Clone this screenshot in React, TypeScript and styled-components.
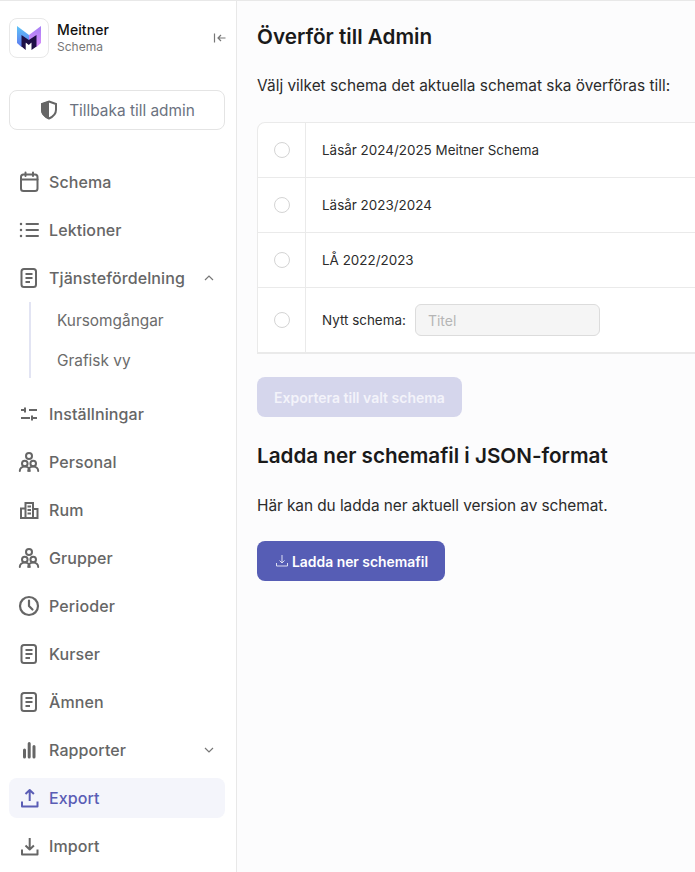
import React from 'react';
import styled, { createGlobalStyle } from 'styled-components';

const GlobalStyle = createGlobalStyle`
  html, body {
    margin: 0;
    padding: 0;
    height: 100%;
    overflow: hidden;
    background: #fcfcfd;
  }
  * { box-sizing: border-box; }
`;

const Page = styled.div`
  display: flex;
  width: 100%;
  height: 872px;
  overflow: hidden;
  border-top: 1px solid #e8e8e8;
  font-family: Inter, "Liberation Sans", sans-serif;
`;

const Sidebar = styled.aside`
  flex: 0 0 237px;
  height: 100%;
  padding: 17px 11px 0 9px;
  background: #ffffff;
  border-right: 1px solid #e8e8e8;
`;

const Brand = styled.div`
  display: flex;
  align-items: center;
  gap: 8px;
`;

const LogoBox = styled.div`
  display: flex;
  align-items: center;
  justify-content: center;
  width: 40px;
  height: 40px;
  border: 1px solid #e8e8e8;
  border-radius: 8px;
`;

const BrandText = styled.div`
  flex: 1;
  display: flex;
  flex-direction: column;
  gap: 1px;
  padding-bottom: 2px;
`;

const BrandName = styled.div`
  font-size: 14px;
  line-height: 17px;
  font-weight: 500;
  letter-spacing: 0.1px;
  color: #111;
`;

const BrandSub = styled.div`
  font-size: 12px;
  line-height: 15px;
  color: #777;
`;

const CollapseIcon = styled.svg`
  width: 14px;
  height: 14px;
  margin-right: -2px;
  color: #777;
`;

const BackButton = styled.button`
  display: flex;
  align-items: center;
  justify-content: center;
  gap: 10px;
  width: 216px;
  height: 40px;
  margin-top: 32px;
  background: #fff;
  border: 1px solid #e4e4e4;
  border-radius: 8px;
  font-family: inherit;
  font-size: 15.4px;
  color: #6b7280;
`;

const Nav = styled.nav`
  display: flex;
  flex-direction: column;
  gap: 8px;
  width: 216px;
  margin-top: 32px;
`;

const NavItem = styled.div<{ $active?: boolean }>`
  display: flex;
  align-items: center;
  gap: 8px;
  height: 40px;
  padding: 0 8px;
  border-radius: 8px;
  font-size: 16px;
  font-weight: 500;
  letter-spacing: 0.1px;
  color: ${({ $active }) => ($active ? '#5a5db5' : '#666666')};
  background: ${({ $active }) => ($active ? '#f4f5fb' : 'transparent')};
`;

const NavLabel = styled.span`
  flex: 1;
`;

const Chevron = styled.svg`
  width: 12px;
  height: 12px;
  margin-right: 2px;
  color: #777;
`;

const SubNav = styled.div`
  display: flex;
  flex-direction: column;
  gap: 4px;
  margin: -4px 0 8px 20px;
  padding-left: 26px;
  border-left: 2px solid #e2e4f3;
`;

const SubItem = styled.div`
  display: flex;
  align-items: center;
  height: 36px;
  font-size: 15.4px;
  color: #6b6b6b;
`;

const Main = styled.main`
  flex: 1;
  min-width: 0;
  padding: 21px 0 0 20px;
  background: #fcfcfd;
  font-family: Inter, sans-serif;
  color: #1c1c1c;
`;

const Heading = styled.h2`
  margin: 0;
  font-size: 20.7px;
  line-height: 30px;
  font-weight: 600;
  color: #1a1a1a;
  white-space: nowrap;
`;

const Lead = styled.p`
  margin: 22px 0 0;
  font-size: 15.4px;
  line-height: 24px;
  color: #2b2b2b;
  white-space: nowrap;
`;

const Table = styled.div`
  width: 700px;
  margin-top: 24px;
  background: #fff;
  border: 1px solid #eaeaea;
  border-bottom-width: 2px;
  border-radius: 8px 0 0 0;
`;

const Row = styled.div<{ $tall?: boolean }>`
  display: flex;
  height: ${({ $tall }) => ($tall ? '64px' : '55px')};
  border-bottom: 1px solid #eaeaea;
  &:last-child { border-bottom: none; }
`;

const RadioCell = styled.div`
  display: flex;
  align-items: center;
  justify-content: center;
  flex: 0 0 48px;
  border-right: 1px solid #eaeaea;
`;

const Radio = styled.span`
  display: block;
  width: 16px;
  height: 16px;
  border: 1px solid #d4d4d4;
  border-radius: 50%;
  background: #fff;
`;

const LabelCell = styled.div`
  display: flex;
  align-items: center;
  gap: 9px;
  padding-left: 16px;
  font-size: 13.4px;
  letter-spacing: 0.02px;
  color: #2b2b2b;
`;

const TitleInput = styled.input`
  width: 185px;
  height: 32px;
  padding: 0 12px;
  background: #f5f5f5;
  border: 1px solid #dcdcdc;
  border-radius: 6px;
  font-family: Inter, sans-serif;
  font-size: 14px;
  &::placeholder { color: #b5b5b5; }
`;

const PrimaryButton = styled.button<{ $disabled?: boolean }>`
  display: flex;
  align-items: center;
  gap: 2px;
  height: 40px;
  padding: 0 17px;
  border: none;
  border-radius: 8px;
  font-family: Inter, sans-serif;
  font-size: 14px;
  font-weight: 600;
  color: ${({ $disabled }) => ($disabled ? '#f3f3fa' : '#ffffff')};
  background: ${({ $disabled }) => ($disabled ? '#d5d6ec' : '#565db5')};
`;

const ExportButton = styled(PrimaryButton)`
  margin-top: 23px;
`;

const SecondHeading = styled(Heading)`
  margin-top: 24px;
  font-size: 20.65px;
`;

const SecondLead = styled(Lead)`
  margin-top: 23px;
  letter-spacing: -0.06px;
`;

const DownloadButton = styled(PrimaryButton)`
  margin-top: 23px;
  padding-top: 1px;
  font-size: 13.9px;
`;

const DownloadGlyph = styled.svg`
  width: 16px;
  height: 16px;
  margin-top: -2px;
  color: #dcdef2;
`;

type IconName =
  | 'calendar' | 'list' | 'doc' | 'sliders' | 'people'
  | 'building' | 'clock' | 'bars' | 'upload' | 'download';

const NavIcon = ({ name }: { name: IconName }) => {
  const common = { fill: 'none', stroke: 'currentColor', strokeWidth: 2, strokeLinecap: 'round' as const, strokeLinejoin: 'round' as const };
  return (
    <svg width="24" height="24" viewBox="0 0 24 24" {...common} style={{ flex: '0 0 24px' }}>
      {name === 'calendar' && (
        <>
          <rect x="4" y="4.5" width="16.5" height="16.5" rx="2.5" />
          <path d="M4 9.5h16.5M8.500 2.500v3.500M16 2.500v3.500" />
        </>
      )}
      {name === 'list' && (
        <>
          <path d="M9.500 6h11.500M9.500 12h11.500M9.500 18h11.500" />
          <path d="M4 6h.01M4 12h.01M4 18h.01" strokeWidth="2.500" />
        </>
      )}
      {name === 'doc' && (
        <>
          <rect x="4.500" y="3" width="14.500" height="18" rx="2.500" />
          <path d="M8.500 8h7M8.500 12h7M8.500 16h4.500" strokeLinecap="butt" />
        </>
      )}
      {name === 'sliders' && (
        <path d="M4 8h3.500M8 5.500v5M12 8h8M4 16h9M15 13.500v5M15 16h5" strokeLinecap="butt" />
      )}
      {name === 'people' && (
        <g strokeWidth="2">
          <circle cx="12" cy="6" r="3" />
          <circle cx="7.800" cy="13.500" r="2.800" />
          <circle cx="16.200" cy="13.500" r="2.800" />
          <path d="M2.800 21c0-2.800 2.200-4.600 5-4.600s5 1.800 5 4.600" />
          <path d="M11.200 21c0-2.800 2.200-4.600 5-4.600s5 1.800 5 4.600" />
        </g>
      )}
      {name === 'building' && (
        <g strokeWidth="2" strokeLinecap="butt" strokeLinejoin="miter">
          <path d="M4 19.500v-9h4M8.500 19.500V5h7.500v14.500M16 11h4.500v8.500M3 20h18.500" />
          <path d="M10.500 8.500h3.500M10.500 12h3.500M10.500 15.500h3.500" />
        </g>
      )}
      {name === 'clock' && (
        <>
          <circle cx="12" cy="12" r="9" strokeWidth="2.200" />
          <path d="M12 6.500V12l3.500 3.500" strokeWidth="2.200" />
        </>
      )}
      {name === 'bars' && (
        <path d="M7.500 12v7M12.200 5.500v13.500M17 8.500V19" strokeWidth="3" />
      )}
      {name === 'upload' && (
        <path d="M5 15.500V20.500h15.500v-5M12.700 15V4.500M8.500 8l4.200-4 4.200 4" strokeLinecap="butt" />
      )}
      {name === 'download' && (
        <path d="M5 15.500V20.500h15.500v-5M12.700 4v11M8.500 11.500l4.200 4 4.200-4" strokeLinecap="butt" />
      )}
    </svg>
  );
};

const Logo = () => (
  <svg width="24" height="24" viewBox="0 0 24 24">
    <defs>
      <linearGradient id="logoLeft" x1="0" y1="0" x2="0" y2="1">
        <stop offset="0" stopColor="#5ec3f7" />
        <stop offset="1" stopColor="#5f7af0" />
      </linearGradient>
      <linearGradient id="logoRight" x1="0" y1="0" x2="0" y2="1">
        <stop offset="0" stopColor="#a57ff5" />
        <stop offset="1" stopColor="#d98cfb" />
      </linearGradient>
    </defs>
    <polygon points="0,0 12,9 12,14 4.500,21 0,17" fill="url(#logoLeft)" />
    <polygon points="24,0 12,9 12,14 19.500,21 24,17" fill="url(#logoRight)" />
    <polygon points="4.500,9 11.800,14 19.500,9 19.500,20.500 14.500,24 14.500,16.500 11.800,19 8.700,16.500 8.700,24 4.500,20.500" fill="#1e0f45" />
  </svg>
);

const Shield = () => (
  <svg width="20" height="20" viewBox="0 0 20 20">
    <path d="M10 1.500l7 2.500v5.800c0 4.200-3 7-7 8.700-4-1.700-7-4.500-7-8.700V4z" fill="none" stroke="#666" strokeWidth="2" />
    <path d="M10 1l-8 2.700v6c0 4.500 3.400 7.400 8 9.300z" fill="#666" />
  </svg>
);

const mainItems: { name: IconName; label: string }[] = [
  { name: 'sliders', label: 'Inställningar' },
  { name: 'people', label: 'Personal' },
  { name: 'building', label: 'Rum' },
  { name: 'people', label: 'Grupper' },
  { name: 'clock', label: 'Perioder' },
  { name: 'doc', label: 'Kurser' },
  { name: 'doc', label: 'Ämnen' },
];

const schedules = ['Läsår 2024/2025 Meitner Schema', 'Läsår 2023/2024', 'LÅ 2022/2023'];

const App = () => (
  <>
    <GlobalStyle />
    <Page>
      <Sidebar>
        <Brand>
          <LogoBox><Logo /></LogoBox>
          <BrandText>
            <BrandName>Meitner</BrandName>
            <BrandSub>Schema</BrandSub>
          </BrandText>
          <CollapseIcon viewBox="0 0 14 14" fill="none" stroke="currentColor" strokeWidth="1.200">
            <path d="M1.500 2.500v9M12.500 7H5M8 4L5 7l3 3" />
          </CollapseIcon>
        </Brand>
        <BackButton><Shield />Tillbaka till admin</BackButton>
        <Nav>
          <NavItem><NavIcon name="calendar" /><NavLabel>Schema</NavLabel></NavItem>
          <NavItem><NavIcon name="list" /><NavLabel>Lektioner</NavLabel></NavItem>
          <NavItem>
            <NavIcon name="doc" />
            <NavLabel>Tjänstefördelning</NavLabel>
            <Chevron viewBox="0 0 12 12" fill="none" stroke="currentColor" strokeWidth="1.200"><path d="M2 8l4-4 4 4" /></Chevron>
          </NavItem>
          <SubNav>
            <SubItem>Kursomgångar</SubItem>
            <SubItem>Grafisk vy</SubItem>
          </SubNav>
          {mainItems.map((item) => (
            <NavItem key={item.label}><NavIcon name={item.name} /><NavLabel>{item.label}</NavLabel></NavItem>
          ))}
          <NavItem>
            <NavIcon name="bars" />
            <NavLabel>Rapporter</NavLabel>
            <Chevron viewBox="0 0 12 12" fill="none" stroke="currentColor" strokeWidth="1.200"><path d="M2 4l4 4 4-4" /></Chevron>
          </NavItem>
          <NavItem $active><NavIcon name="upload" /><NavLabel>Export</NavLabel></NavItem>
          <NavItem><NavIcon name="download" /><NavLabel>Import</NavLabel></NavItem>
        </Nav>
      </Sidebar>
      <Main>
        <Heading>Överför till Admin</Heading>
        <Lead>Välj vilket schema det aktuella schemat ska överföras till:</Lead>
        <Table>
          {schedules.map((label) => (
            <Row key={label}>
              <RadioCell><Radio /></RadioCell>
              <LabelCell>{label}</LabelCell>
            </Row>
          ))}
          <Row $tall>
            <RadioCell><Radio /></RadioCell>
            <LabelCell>Nytt schema: <TitleInput placeholder="Titel" readOnly /></LabelCell>
          </Row>
        </Table>
        <ExportButton $disabled>Exportera till valt schema</ExportButton>
        <SecondHeading>Ladda ner schemafil i JSON-format</SecondHeading>
        <SecondLead>Här kan du ladda ner aktuell version av schemat.</SecondLead>
        <DownloadButton>
          <DownloadGlyph viewBox="0 0 16 16" fill="none" stroke="currentColor" strokeWidth="1">
            <path d="M2.500 10v3h11v-3M8 2v8M5.500 7.500L8 10l2.500-2.500" />
          </DownloadGlyph>
          Ladda ner schemafil
        </DownloadButton>
      </Main>
    </Page>
  </>
);

export default App;
